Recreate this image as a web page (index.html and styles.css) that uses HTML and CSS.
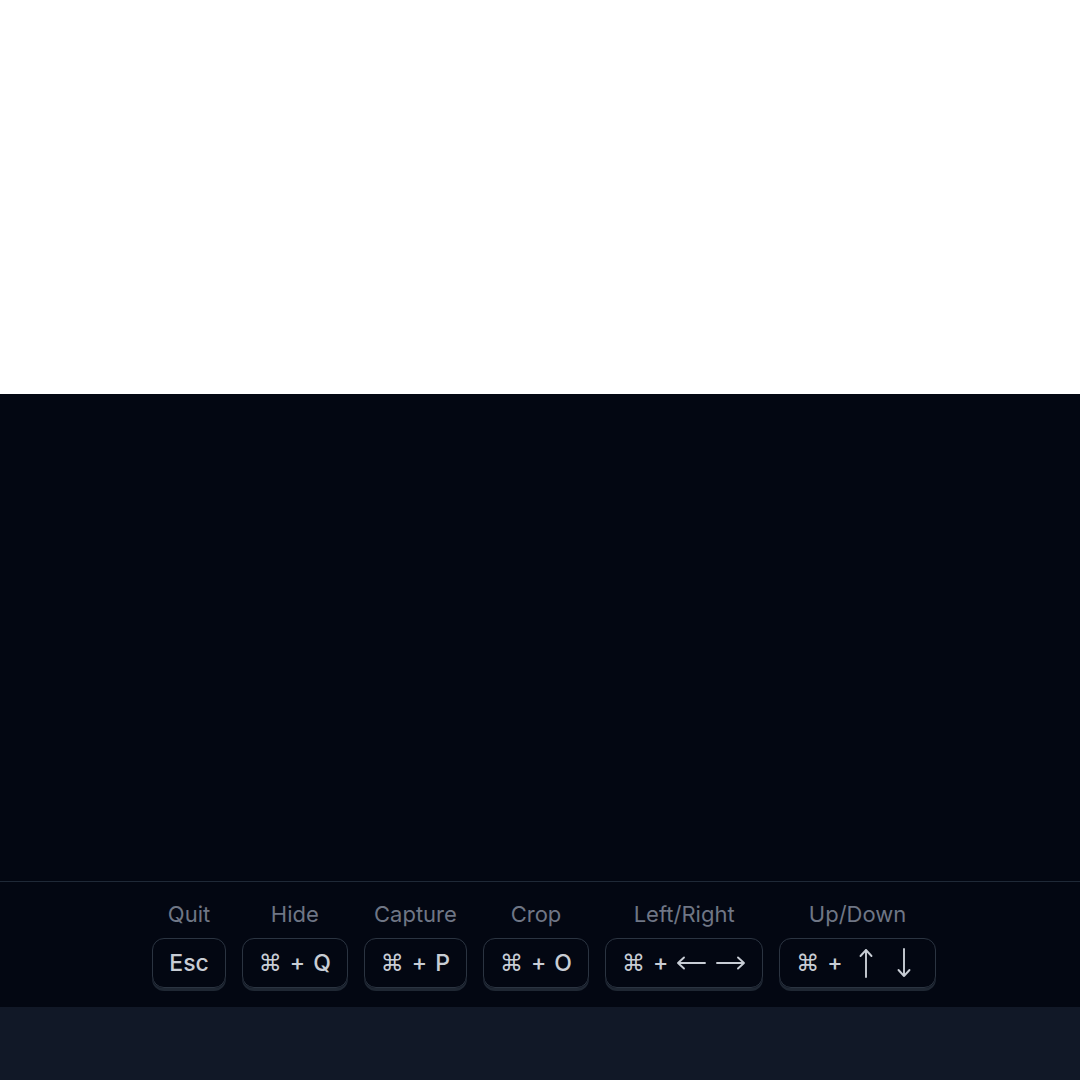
FILE: index.html
```html
<!DOCTYPE html>
<html>
<head>
<meta charset="utf-8">
<link rel="stylesheet" href="styles.css">
</head>
<body>
<div class="top"></div>
<div class="stage">
  <div class="canvas"></div>
  <footer class="shortcuts">
    <div class="group"><div class="label">Quit</div><div class="key">Esc</div></div>
    <div class="group"><div class="label">Hide</div><div class="key"><span class="cmd">⌘</span><span class="plus">+</span><span>Q</span></div></div>
    <div class="group"><div class="label">Capture</div><div class="key"><span class="cmd">⌘</span><span class="plus">+</span><span>P</span></div></div>
    <div class="group"><div class="label">Crop</div><div class="key"><span class="cmd">⌘</span><span class="plus">+</span><span>O</span></div></div>
    <div class="group"><div class="label">Left/Right</div><div class="key"><span class="cmd">⌘</span><span class="plus">+</span>
      <svg class="harrow" width="30" height="14" viewBox="0 0 30 14"><path d="M29 7H2M8 1.5L2 7l6 5.5" fill="none" stroke="currentColor" stroke-width="1.9" stroke-linecap="round" stroke-linejoin="round"/></svg>
      <svg class="harrow" width="30" height="14" viewBox="0 0 30 14"><path d="M1 7h27M22 1.5L28 7l-6 5.5" fill="none" stroke="currentColor" stroke-width="1.9" stroke-linecap="round" stroke-linejoin="round"/></svg>
    </div></div>
    <div class="group"><div class="label">Up/Down</div><div class="key"><span class="cmd">⌘</span><span class="plus">+</span>
      <svg class="varrow" width="14" height="30" viewBox="0 0 14 30"><path d="M7 29V2M1.5 8L7 2l5.5 6" fill="none" stroke="currentColor" stroke-width="1.9" stroke-linecap="round" stroke-linejoin="round"/></svg>
      <svg class="varrow" width="14" height="30" viewBox="0 0 14 30"><path d="M7 1v27M1.5 22L7 28l5.5-6" fill="none" stroke="currentColor" stroke-width="1.9" stroke-linecap="round" stroke-linejoin="round"/></svg>
    </div></div>
  </footer>
</div>
<div class="bottom"></div>
</body>
</html>
```
FILE: styles.css
```css
html, body {
  margin: 0;
  padding: 0;
  width: 1080px;
  height: 1080px;
  overflow: hidden;
  font-family: Inter, "Noto Sans", "DejaVu Sans", sans-serif;
  background: #111827;
}
.top {
  height: 394px;
  background: #ffffff;
}
.stage {
  background: #030712;
  display: flex;
  flex-direction: column;
}
.canvas {
  height: 487px;
}
.shortcuts {
  border-top: 1px solid #1f2937;
  height: 126px;
  box-sizing: border-box;
  padding: 18px 0 0 8px;
  display: flex;
  justify-content: center;
  gap: 16px;
}
.group {
  display: flex;
  flex-direction: column;
  align-items: center;
  gap: 10px;
}
.label {
  color: #6f7685;
  font-size: 22px;
  line-height: 28px;
}
.key {
  height: 50px;
  box-sizing: border-box;
  padding: 0 16px;
  border: 1px solid #2b3441;
  border-radius: 12px;
  box-shadow: 0 3px 0 #1f2733;
  color: #c8cdd5;
  font-size: 23px;
  font-weight: 500;
  display: flex;
  align-items: center;
  gap: 8px;
}
.cmd {
  font-family: "DejaVu Sans", sans-serif;
  font-size: 23px;
  font-weight: 400;
}
.harrow + .harrow {
  margin-left: 2px;
}
.varrow {
  margin: 0 8px;
}
.bottom {
  height: 73px;
  background: #111827;
}
```
